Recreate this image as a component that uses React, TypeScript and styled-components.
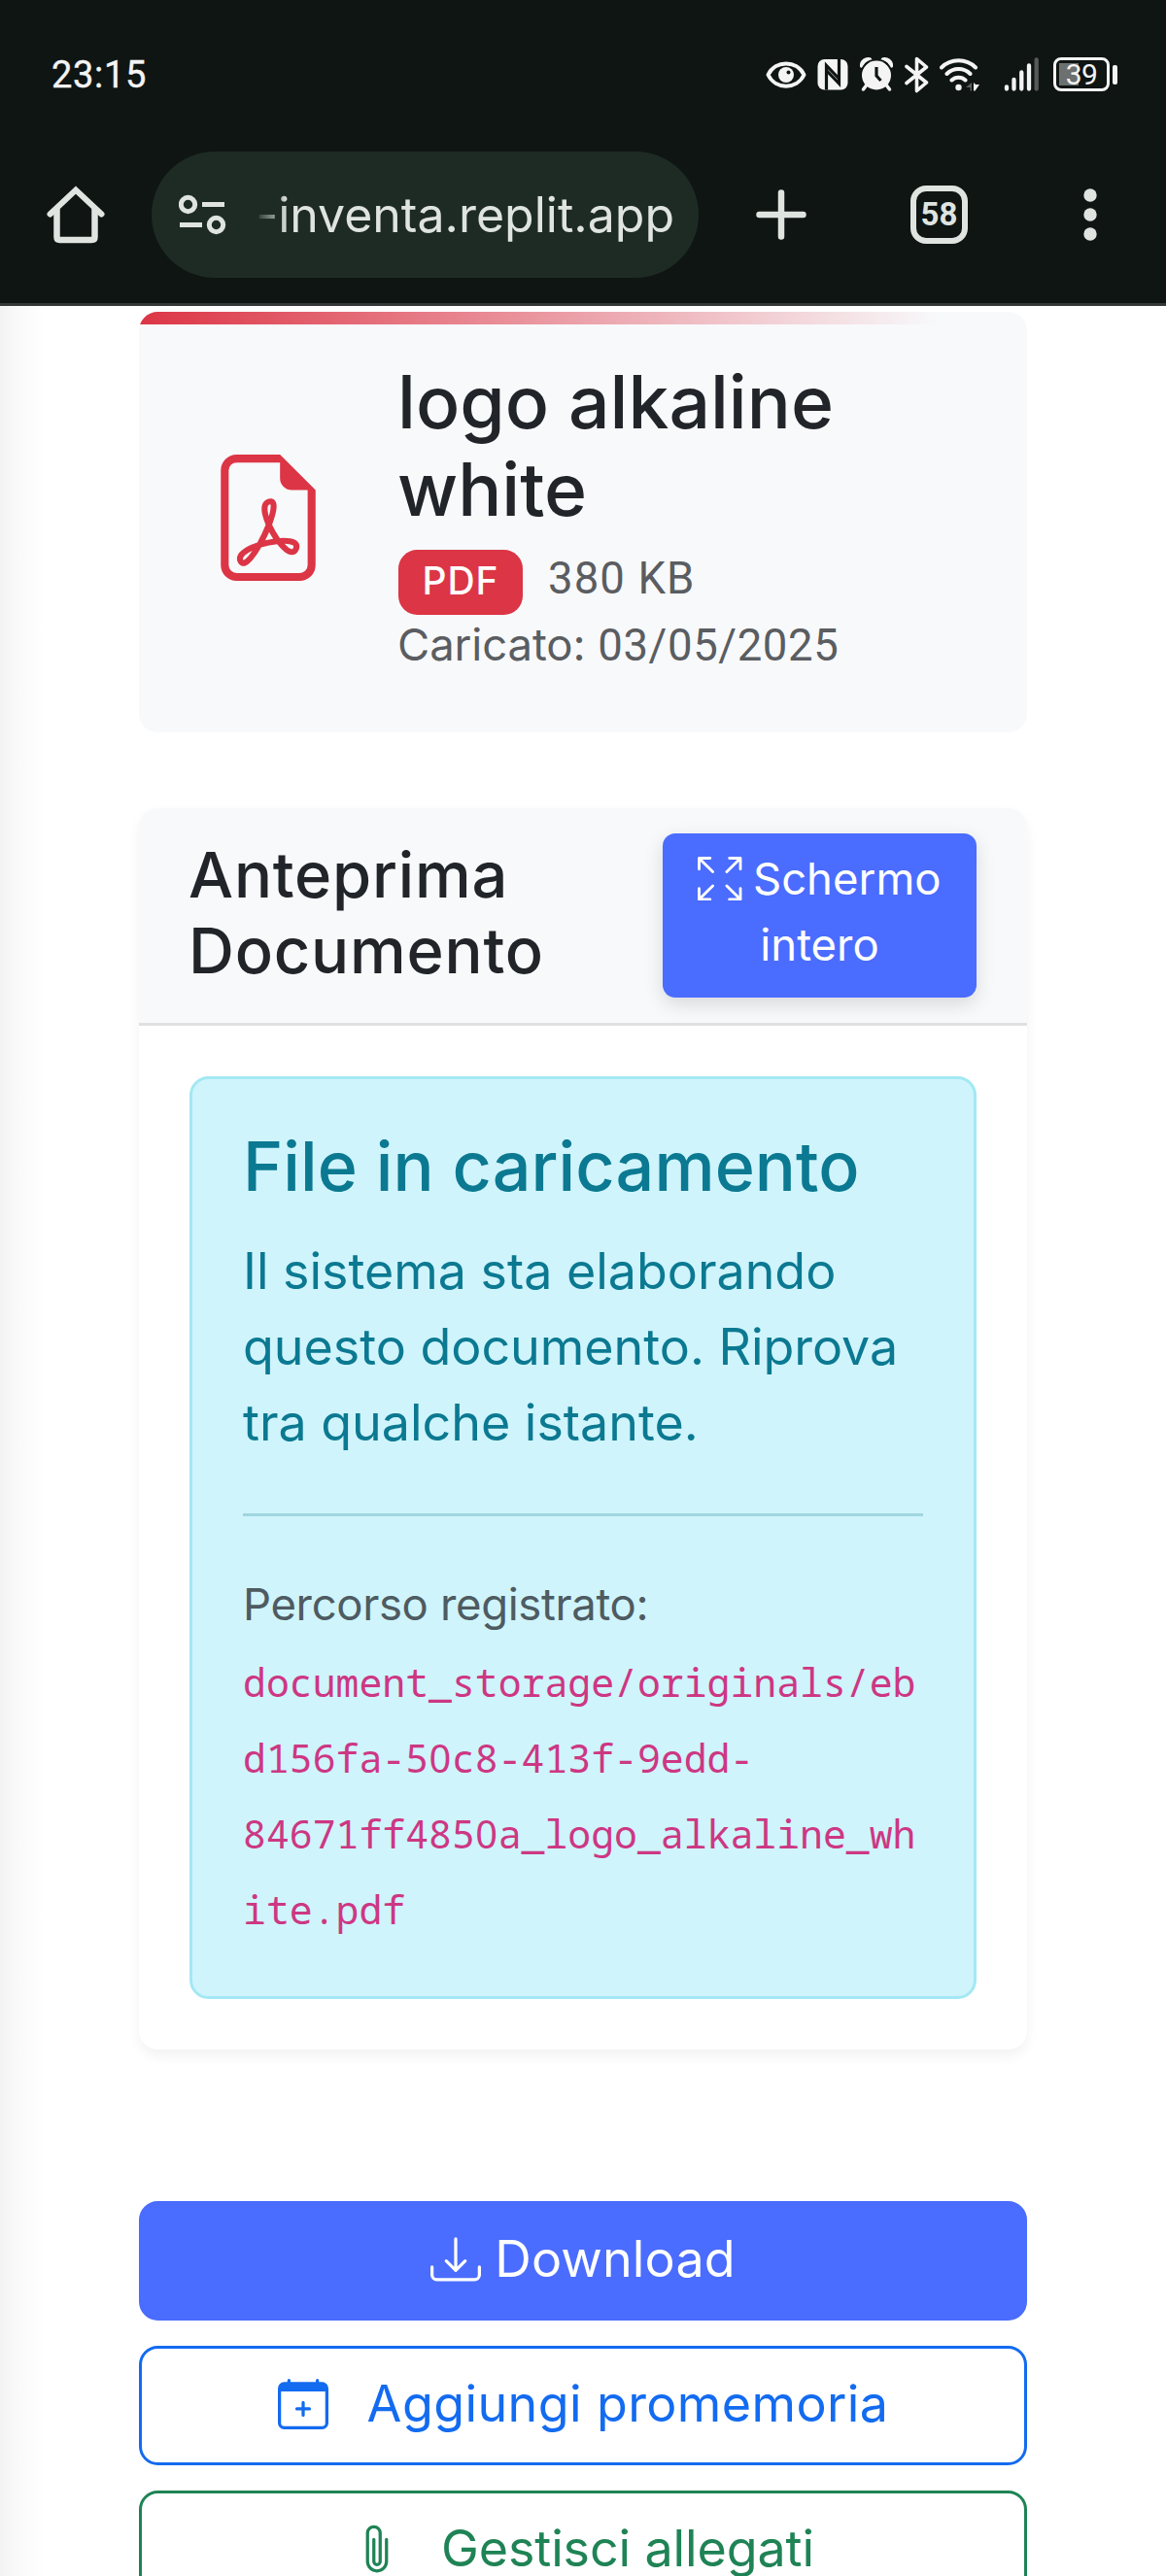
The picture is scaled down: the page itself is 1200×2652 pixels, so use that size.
import React from 'react';
import styled, { createGlobalStyle } from 'styled-components';
import {
  BsArrowsFullscreen,
  BsCalendarPlus,
  BsDownload,
  BsFileEarmarkPdf,
  BsPaperclip,
} from 'react-icons/bs';

const Global = createGlobalStyle`
  *, *::before, *::after { box-sizing: border-box; }
  html, body { margin: 0; padding: 0; background: #fff; }
  body { font-family: Inter, "Open Sans", sans-serif; color: #212529; overflow: hidden; }
  svg { display: block; flex: none; }
`;

const Screen = styled.div`
  width: 1200px;
  height: 2652px;
  overflow: hidden;
  display: flex;
  flex-direction: column;
`;

const Chrome = styled.header`
  flex: none;
  height: 315px;
  background: #0f1513;
  border-bottom: 3px solid #343837;
  display: flex;
  flex-direction: column;
`;

const StatusBar = styled.div`
  height: 156px;
  padding: 0 50px 3px 53px;
  display: flex;
  align-items: center;
  color: #f4f4f4;
`;

const Clock = styled.span`
  margin-top: 1px;
  font: 400 38px/44px Roboto, sans-serif;
  letter-spacing: 0.7px;
  -webkit-text-stroke: 0.4px currentColor;
`;

const StatusIcons = styled.div`
  margin-left: auto;
  display: flex;
  align-items: center;
`;

const Glyph = styled.svg<{ $gap?: number }>`
  margin-left: ${p => p.$gap ?? 0}px;
`;

const Battery = styled.div`
  margin-left: 14px;
  display: flex;
  align-items: center;
  gap: 3px;
`;

const BatteryShell = styled.div`
  width: 58px;
  height: 35px;
  border: 3px solid #f4f4f4;
  border-radius: 8px;
  padding: 3px;
  background: linear-gradient(#6c706f, #6c706f) 3px 3px / 20px 23px no-repeat;
  display: flex;
  align-items: center;
  justify-content: center;
  font: 400 30px/24px Roboto, sans-serif;
  letter-spacing: -0.6px;
`;

const BatteryTip = styled.div`
  width: 5px;
  height: 20px;
  border-radius: 2px;
  background: #f4f4f4;
`;

const Toolbar = styled.div`
  height: 130px;
  padding-left: 48px;
  display: flex;
  align-items: center;
  color: #dfe4e0;
`;

const AddressPill = styled.div`
  width: 563px;
  height: 130px;
  margin-left: 48px;
  padding: 0 25px 0 28px;
  border-radius: 65px;
  background: #1e2b25;
  display: flex;
  align-items: center;
  justify-content: space-between;
`;

const Address = styled.span`
  width: 432px;
  display: flex;
  justify-content: flex-end;
  white-space: nowrap;
  font-size: 50px;
  line-height: 60px;
  mask-image: linear-gradient(90deg, transparent 0, #000 34px);
`;

const TabCount = styled.div`
  width: 59px;
  height: 60px;
  margin-left: 107px;
  border: 6.5px solid #dfe4e0;
  border-radius: 16px;
  display: flex;
  align-items: center;
  justify-content: center;
  font: 700 33px/36px Roboto, sans-serif;
`;

const Page = styled.main`
  flex: 1;
  min-height: 0;
  padding: 6px 143px 0 143px;
  background: linear-gradient(90deg, #f3f3f3 0, #fafafa 20px, #fff 46px);
  display: flex;
  flex-direction: column;
`;

const FileCard = styled.section`
  flex: none;
  height: 432.5px;
  padding: 47.5px 40px 0 68px;
  border-radius: 19.5px;
  background:
    linear-gradient(90deg, #dc3545, rgba(220, 53, 69, 0) 90%) 0 0 / 100% 13px no-repeat,
    #f8f9fb;
  display: flex;
  align-items: flex-start;
`;

const PdfMark = styled.div`
  margin-top: 99.5px;
  font-size: 130px;
  color: #dc3545;
`;

const FileInfo = styled.div`
  margin-left: 69px;
`;

const FileTitle = styled.h1`
  margin: 0 0 0 -1px;
  width: 500px;
  font-size: 75px;
  line-height: 90px;
  font-weight: 500;
`;

const Meta = styled.div`
  margin-top: 13.5px;
  font-size: 45.5px;
  line-height: 68px;
  letter-spacing: -0.1px;
  color: #5a5d61;
`;

const MetaRow = styled.div`
  height: 68px;
  display: flex;
  align-items: flex-start;
`;

const UploadedAt = styled.div`
  margin-left: -1px;
`;

const Figures = styled.span<{ $track: number }>`
  font-family: Roboto, sans-serif;
  letter-spacing: ${p => p.$track}px;
`;

const Badge = styled.span`
  width: 128px;
  height: 67px;
  margin: 4px 26px 0 0;
  padding-bottom: 4px;
  border-radius: 19.5px;
  background: #dc3545;
  color: #fff;
  font-size: 39px;
  line-height: 48px;
  font-weight: 500;
  letter-spacing: 1px;
  display: flex;
  align-items: center;
  justify-content: center;
`;

const PreviewCard = styled.section`
  flex: none;
  height: 1278px;
  margin-top: 78.5px;
  border-radius: 19.5px;
  background: #fff;
  box-shadow: 0 6.5px 13px rgba(0, 0, 0, 0.05);
`;

const PreviewHead = styled.div`
  height: 224px;
  padding: 26px 52px 0 51px;
  border-radius: 19.5px 19.5px 0 0;
  border-bottom: 3px solid #dfe0e1;
  background: #f8f9fb;
  display: flex;
  align-items: flex-start;
  justify-content: space-between;
`;

const PreviewTitle = styled.h2`
  margin: 3.5px 0 0;
  width: 400px;
  font-size: 65px;
  line-height: 78px;
  font-weight: 500;
  letter-spacing: 0.8px;
`;

const FullscreenButton = styled.button`
  width: 323px;
  height: 169px;
  padding: 12.5px 0 0;
  border: 0;
  border-radius: 13px;
  background: #4a6cff;
  box-shadow: 0 6.5px 19px rgba(0, 0, 0, 0.13);
  color: #fff;
  font: 400 45.5px/68px Inter, sans-serif;
  display: flex;
  flex-direction: column;
  align-items: center;
`;

const ButtonLine = styled.span`
  height: 68px;
  display: flex;
  align-items: center;
  gap: 11px;
`;

const Alert = styled.div`
  height: 949.5px;
  margin: 52px 52px 0;
  padding: 47.5px 52px 0;
  border: 3px solid #a3e8f4;
  border-radius: 19.5px;
  background: #cff4fc;
  color: #0b7991;
`;

const AlertTitle = styled.h3`
  margin: 0;
  font-size: 70px;
  line-height: 84px;
  font-weight: 500;
  letter-spacing: 0.1px;
`;

const AlertText = styled.p`
  margin: 27px 0 0;
  font-size: 52px;
  line-height: 78px;
  letter-spacing: -0.03px;
`;

const Rule = styled.hr`
  margin: 54.5px 0 0;
  border: 0;
  height: 3px;
  background: #9fd5de;
`;

const PathLabel = styled.div`
  margin-top: 51.5px;
  font-size: 45.5px;
  line-height: 78px;
  letter-spacing: -0.36px;
  color: #4e5b61;
`;

const PathCode = styled.code`
  display: block;
  margin-top: 2.5px;
  font: 400 39.8px/78px "Noto Sans Mono", "DejaVu Sans Mono", monospace;
  color: #cd3783;
`;

const CodeLine = styled.span`
  display: flex;
  white-space: pre;
`;

const PlainZero = styled.span`
  width: 0.6em;
  text-align: center;
  font-family: "Noto Sans", sans-serif;
`;

const Actions = styled.div`
  margin-top: 156px;
  display: flex;
  flex-direction: column;
  gap: 26px;
`;

const ActionButton = styled.button<{ $color: string; $filled?: boolean; $gap: number; $track: number }>`
  flex: none;
  height: 123px;
  padding: 0 0 4px;
  border: 3px solid ${p => p.$color};
  border-radius: 19.5px;
  background: ${p => (p.$filled ? p.$color : 'transparent')};
  color: ${p => (p.$filled ? '#fff' : p.$color)};
  font: 400 52px/78px Inter, sans-serif;
  letter-spacing: ${p => p.$track}px;
  display: flex;
  align-items: center;
  justify-content: center;
  gap: ${p => p.$gap}px;
`;

function StatusGlyphs() {
  return (
    <StatusIcons>
      <Glyph width="42" height="38" viewBox="0 0 42 38" fill="none">
        <path d="M2.500 19C10 3.500 32 3.500 39.500 19C32 34.500 10 34.500 2.500 19Z" stroke="#f4f4f4" strokeWidth="4" strokeLinejoin="round" />
        <circle cx="21" cy="19" r="8" fill="#f4f4f4" />
        <circle cx="23.500" cy="16.500" r="2" fill="#0f1513" />
      </Glyph>
      <Glyph $gap={11} width="32" height="38" viewBox="0 0 32 38" fill="none">
        <rect x="0.500" y="3" width="31" height="31.500" rx="7" fill="#f4f4f4" />
        <path d="M9.500 34.500V9.500L22 22.500" stroke="#0f1513" strokeWidth="3.200" />
        <path d="M22.500 3V28L10 15" stroke="#0f1513" strokeWidth="3.200" />
      </Glyph>
      <Glyph $gap={12} width="34" height="38" viewBox="0 0 34 38" fill="none">
        <circle cx="17" cy="19.500" r="15" fill="#f4f4f4" />
        <path d="M2 9.500A6.500 6.500 0 0 1 10 3.500M32 9.500A6.500 6.500 0 0 0 24 3.500" stroke="#f4f4f4" strokeWidth="4.500" strokeLinecap="round" />
        <path d="M2 13.500A17 17 0 0 1 12 4M32 13.500A17 17 0 0 0 22 4" stroke="#0f1513" strokeWidth="1.400" />
        <path d="M6.500 30L3.500 34M27.500 30L30.500 34" stroke="#f4f4f4" strokeWidth="3.500" strokeLinecap="round" />
        <path d="M17 11V20L21.500 25" stroke="#0f1513" strokeWidth="3.200" />
      </Glyph>
      <Glyph $gap={12} width="26" height="38" viewBox="0 0 26 38" fill="none">
        <path d="M2 10.500L22.500 27L12.500 35.500V2.500L22.500 11L2 27.500" stroke="#f4f4f4" strokeWidth="3.600" strokeLinejoin="round" strokeLinecap="round" />
      </Glyph>
      <Glyph $gap={10} width="43" height="38" viewBox="0 0 43 38" fill="none">
        <path d="M2 11.500A25 25 0 0 1 37 11.500M7.500 18A17 17 0 0 1 31.500 18M12.500 24.500A10 10 0 0 1 26.500 24.500" stroke="#f4f4f4" strokeWidth="4" strokeLinecap="round" />
        <circle cx="19.500" cy="32" r="3.200" fill="#f4f4f4" />
        <path d="M33 27V35.500H31.500V32H27Z" fill="#5a5e5d" />
        <path d="M35 27V35.500H36.500L41 29H37Z" fill="#f4f4f4" />
      </Glyph>
      <Glyph $gap={23} width="37" height="38" viewBox="0 0 37 38" strokeWidth="4.300" strokeLinecap="round">
        <path d="M3 31.500V33.500M10.500 24V33.500M18.300 16.500V33.500M26 9.500V33.500" stroke="#f4f4f4" />
        <path d="M33.700 3.500V33.500" stroke="#565a59" />
      </Glyph>
      <Battery>
        <BatteryShell>39</BatteryShell>
        <BatteryTip />
      </Battery>
    </StatusIcons>
  );
}

export default function App() {
  return (
    <Screen>
      <Global />
      <Chrome>
        <StatusBar>
          <Clock>23:15</Clock>
          <StatusGlyphs />
        </StatusBar>
        <Toolbar>
          <svg width="60" height="60" viewBox="0 0 60 60" fill="none" stroke="currentColor">
            <path d="M3.500 29.500L30 4.500L56.500 29.500" strokeWidth="6" strokeLinecap="round" />
            <path d="M10.500 24V53Q10.500 56 13.500 56H46.500Q49.500 56 49.500 53V24" strokeWidth="6.500" />
          </svg>
          <AddressPill>
            <svg width="50" height="42" viewBox="0 0 50 42" fill="none" stroke="currentColor" strokeWidth="5">
              <circle cx="9.500" cy="10.500" r="7.200" />
              <path d="M24 10.500H47M1 31.500H24" />
              <circle cx="38.500" cy="31.500" r="7.200" />
            </svg>
            <Address>-inventa.replit.app</Address>
          </AddressPill>
          <Glyph $gap={59} width="52" height="52" viewBox="0 0 52 52" stroke="currentColor" strokeWidth="6.500" strokeLinecap="round">
            <path d="M26 3.500V48.500M3.500 26H48.500" />
          </Glyph>
          <TabCount>58</TabCount>
          <Glyph $gap={119} width="14" height="54" viewBox="0 0 14 54" fill="currentColor">
            <circle cx="7" cy="7" r="6.700" />
            <circle cx="7" cy="27" r="6.700" />
            <circle cx="7" cy="47" r="6.700" />
          </Glyph>
        </Toolbar>
      </Chrome>

      <Page>
        <FileCard>
          <PdfMark><BsFileEarmarkPdf /></PdfMark>
          <FileInfo>
            <FileTitle>logo alkaline white</FileTitle>
            <Meta>
              <MetaRow>
                <Badge>PDF</Badge>
                <Figures $track={1.1}>380 KB</Figures>
              </MetaRow>
              <UploadedAt>Caricato: <Figures $track={0.6}>03/05/2025</Figures></UploadedAt>
            </Meta>
          </FileInfo>
        </FileCard>

        <PreviewCard>
          <PreviewHead>
            <PreviewTitle>Anteprima Documento</PreviewTitle>
            <FullscreenButton>
              <ButtonLine><BsArrowsFullscreen /> Schermo</ButtonLine>
              <ButtonLine>intero</ButtonLine>
            </FullscreenButton>
          </PreviewHead>
          <Alert>
            <AlertTitle>File in caricamento</AlertTitle>
            <AlertText>Il sistema sta elaborando questo documento. Riprova tra qualche istante.</AlertText>
            <Rule />
            <PathLabel>Percorso registrato:</PathLabel>
            <PathCode>
              <CodeLine>document_storage/originals/eb</CodeLine>
              <CodeLine>d156fa-5<PlainZero>0</PlainZero>c8-413f-9edd-</CodeLine>
              <CodeLine>84671ff485<PlainZero>0</PlainZero>a_logo_alkaline_wh</CodeLine>
              <CodeLine>ite.pdf</CodeLine>
            </PathCode>
          </Alert>
        </PreviewCard>

        <Actions>
          <ActionButton $color="#4a6cff" $filled $gap={14} $track={0.15}>
            <BsDownload />Download
          </ActionButton>
          <ActionButton $color="#136bf0" $gap={40} $track={0.39}>
            <BsCalendarPlus />Aggiungi promemoria
          </ActionButton>
          <ActionButton $color="#1f8355" $gap={40} $track={-0.12}>
            <BsPaperclip />Gestisci allegati
          </ActionButton>
        </Actions>
      </Page>
    </Screen>
  );
}
